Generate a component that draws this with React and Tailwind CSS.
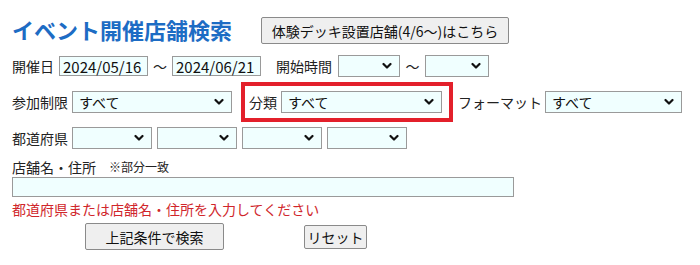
import React from "react"

const font = { fontFamily: '"Noto Sans CJK JP", "Noto Sans", sans-serif' }

function Chevron() {
  return (
    <svg width="10" height="7" viewBox="0 0 10 7" className="absolute right-[8px] top-1/2 -translate-y-1/2">
      <path d="M1.5 1.5 L5 5 L8.5 1.5" fill="none" stroke="#111" strokeWidth="2.2" strokeLinecap="round" strokeLinejoin="round" />
    </svg>
  )
}

function Select({ className, value }) {
  return (
    <div className={`relative h-[22px] shrink-0 ${className}`}>
      <div className="flex h-full items-center border border-[#9a9a9a] bg-[#f0ffff] pl-[6px] text-[14px] leading-none text-[#111]">
        {value}
      </div>
      <Chevron />
    </div>
  )
}

function DateBox({ value, className }) {
  return (
    <div className={`flex h-[20px] shrink-0 items-center border border-[#9a9a9a] bg-[#f0ffff] pl-[3px] text-[15px] leading-none text-[#111] ${className}`}>
      {value}
    </div>
  )
}

export default function App() {
  return (
    <div className="h-[265px] w-[700px] whitespace-nowrap bg-white pl-[12px] text-[14px] text-[#222]" style={font}>
      {/* header */}
      <div className="flex items-center pt-[14px]">
        <h1 className="text-[22px] font-bold leading-[26px] text-[#1d6cc4]">イベント開催店舗検索</h1>
        <button className="ml-[29px] mt-[3px] h-[27px] w-[248px] rounded-[2px] border border-[#8a8a8a] bg-[#efefef] text-[14px] leading-none text-[#111]">
          体験デッキ設置店舗(4/6～)はこちら
        </button>
      </div>

      {/* date / time */}
      <div className="mt-[10px] flex h-[24px] items-center">
        <span className="w-[47px] shrink-0">開催日</span>
        <DateBox value="2024/05/16" className="w-[89px]" />
        <span className="mx-[5px] w-[14px] shrink-0 text-center">～</span>
        <DateBox value="2024/06/21" className="w-[89px]" />
        <span className="ml-[15px] w-[62px] shrink-0">開始時間</span>
        <Select className="w-[62px]" />
        <span className="mx-[5px] w-[15px] shrink-0 text-center">～</span>
        <Select className="w-[64px]" />
      </div>

      {/* conditions */}
      <div className="mt-[4px] flex h-[40px] items-center">
        <span className="w-[60px] shrink-0">参加制限</span>
        <Select className="w-[160px]" value="すべて" />
        <div className="ml-[9px] flex h-[40px] w-[212px] shrink-0 items-center border-[4px] border-[#e3202b] pl-[4px]">
          <span className="w-[32px] shrink-0">分類</span>
          <Select className="w-[161px]" value="すべて" />
        </div>
        <span className="ml-[5px] w-[87px] shrink-0">フォーマット</span>
        <Select className="w-[137px]" value="すべて" />
      </div>

      {/* prefecture */}
      <div className="mt-[4px] flex h-[24px] items-center gap-[5px]">
        <span className="-mr-[1px] w-[56px] shrink-0">都道府県</span>
        <Select className="w-[80px]" />
        <Select className="w-[80px]" />
        <Select className="w-[80px]" />
        <Select className="w-[80px]" />
      </div>

      {/* name / address */}
      <div className="mt-[8px] flex items-end leading-[18px]">
        <span>店舗名・住所</span>
        <span className="ml-[13px] text-[12px]">※部分一致</span>
      </div>
      <div className="mt-[1px] h-[20px] w-[502px] border border-[#9a9a9a] bg-[#f0ffff]" />
      <div className="mt-[2px] leading-[20px] text-[#d0262b]">都道府県または店舗名・住所を入力してください</div>

      {/* buttons */}
      <div className="mt-[4px] flex items-center">
        <button className="ml-[73px] h-[27px] w-[139px] rounded-[2px] border border-[#8a8a8a] bg-[#efefef] text-[14px] leading-none text-[#111]">
          上記条件で検索
        </button>
        <button className="ml-[80px] mt-[1px] h-[24px] w-[63px] rounded-[2px] border border-[#8a8a8a] bg-[#efefef] text-[14px] leading-none text-[#111]">
          リセット
        </button>
      </div>
    </div>
  )
}
